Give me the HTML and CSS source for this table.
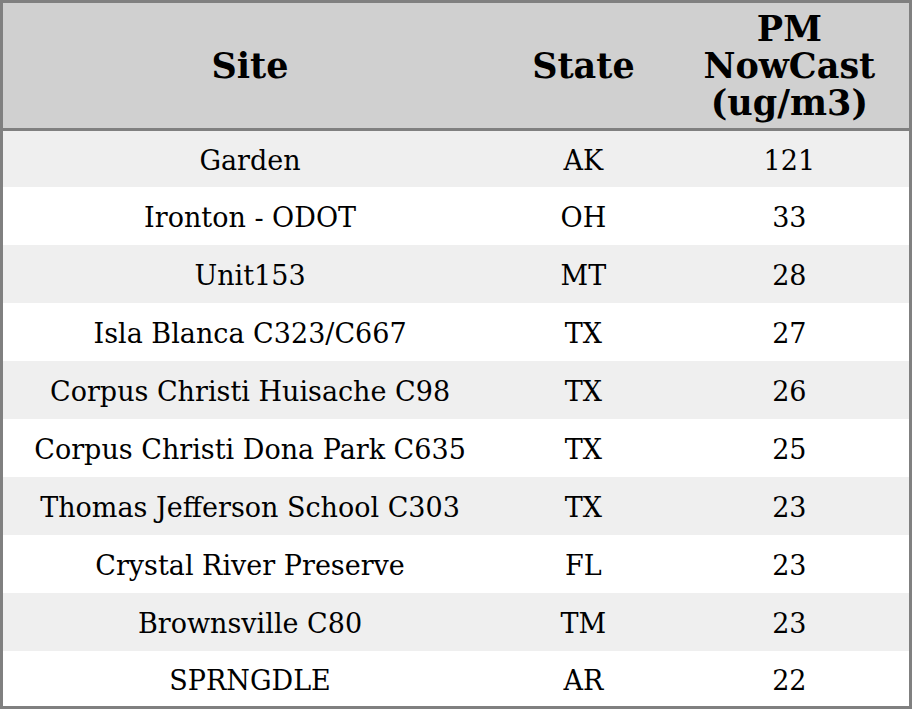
FILE: index.html
```html
<!DOCTYPE html>
<html>
<head>
<meta charset="utf-8">
<link rel="stylesheet" href="styles.css">
</head>
<body>
<table class="data">
  <colgroup>
    <col class="c-site">
    <col class="c-state">
    <col class="c-pm">
  </colgroup>
  <thead>
    <tr><th>Site</th><th>State</th><th>PM<br>NowCast<br>(ug/m3)</th></tr>
  </thead>
  <tbody>
    <tr><td>Garden</td><td>AK</td><td>121</td></tr>
    <tr><td>Ironton - ODOT</td><td>OH</td><td>33</td></tr>
    <tr><td>Unit153</td><td>MT</td><td>28</td></tr>
    <tr><td>Isla Blanca C323/C667</td><td>TX</td><td>27</td></tr>
    <tr><td>Corpus Christi Huisache C98</td><td>TX</td><td>26</td></tr>
    <tr><td>Corpus Christi Dona Park C635</td><td>TX</td><td>25</td></tr>
    <tr><td>Thomas Jefferson School C303</td><td>TX</td><td>23</td></tr>
    <tr><td>Crystal River Preserve</td><td>FL</td><td>23</td></tr>
    <tr><td>Brownsville C80</td><td>TM</td><td>23</td></tr>
    <tr><td>SPRNGDLE</td><td>AR</td><td>22</td></tr>
  </tbody>
</table>
</body>
</html>
```
FILE: styles.css
```css
html, body {
  margin: 0;
  padding: 0;
  background: #ffffff;
}
.data {
  width: 912px;
  border-collapse: collapse;
  border: 3px solid #808080;
  font-family: "DejaVu Serif", serif;
  color: #000;
  table-layout: fixed;
}
.c-site { width: 494px; }
.c-state { width: 172px; }
.c-pm { width: 240px; }
.data th {
  background: #d0d0d0;
  font-size: 35px;
  font-weight: bold;
  padding: 7px 0;
  text-align: center;
  border-bottom: 3px solid #808080;
  line-height: 37px;
}
.data tbody tr {
  height: 58px;
}
.data tbody tr:first-child {
  height: 57px;
}
.data tbody tr:last-child {
  height: 57px;
}
.data td {
  font-size: 27px;
  text-align: center;
  padding: 5px 0 0 0;
  line-height: 30px;
}
.data tbody tr:nth-child(odd) td {
  background: #efefef;
}
.data tbody tr:nth-child(even) td {
  background: #ffffff;
}
```
